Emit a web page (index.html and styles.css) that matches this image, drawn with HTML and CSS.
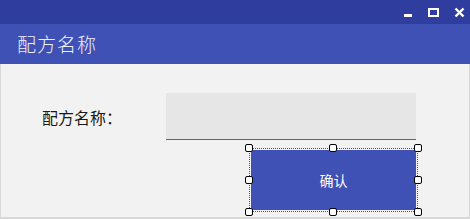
FILE: index.html
```html
<!DOCTYPE html>
<html lang="zh">
<head>
  <meta charset="UTF-8">
  <title>配方名称</title>
  <link rel="stylesheet" href="styles.css">
</head>
<body>
  <div class="window">
    <div class="titlebar">
      <span class="ctl ctl-min"></span>
      <span class="ctl ctl-max"></span>
      <span class="ctl ctl-close">
        <svg width="11" height="11" viewBox="0 0 11 11"><path d="M1.5 1.5 L9.5 9.5 M9.5 1.5 L1.5 9.5" stroke="#fff" stroke-width="2.4" fill="none"/></svg>
      </span>
    </div>
    <header>配方名称</header>
    <div class="content">
      <div class="form-row">
        <label class="field-label" for="recipeName">配方名称：</label>
        <input id="recipeName" class="field-input" type="text">
      </div>
      <div class="button-row">
        <div class="selected">
          <button class="ok-btn">确认</button>
          <span class="handle h-tl"></span>
          <span class="handle h-tm"></span>
          <span class="handle h-tr"></span>
          <span class="handle h-ml"></span>
          <span class="handle h-mr"></span>
          <span class="handle h-bl"></span>
          <span class="handle h-bm"></span>
          <span class="handle h-br"></span>
        </div>
      </div>
    </div>
  </div>
</body>
</html>
```

FILE: styles.css
```css
html, body {
  margin: 0; padding: 0;
  font-family: "Noto Sans CJK SC", "Noto Sans", sans-serif;
}
.window {
  width: 470px;
  height: 219px;
  display: flex;
  flex-direction: column;
  background: #f2f2f2;
}
.titlebar {
  height: 24px;
  background-color: #2f3e9e;
  display: flex;
  align-items: flex-start;
  justify-content: flex-end;
  padding-right: 5px;
}
.ctl {
  display: block;
  box-sizing: border-box;
}
.ctl-min {
  width: 8px;
  height: 3px;
  background: #fff;
  margin-top: 14px;
  margin-right: 16px;
}
.ctl-max {
  width: 11px;
  height: 9px;
  border: 2px solid #fff;
  margin-top: 8px;
  margin-right: 15px;
}
.ctl-close {
  width: 11px;
  height: 11px;
  margin-top: 7px;
}
.ctl-close svg { display: block; }
header {
  height: 40px;
  background-color: #3f51b5;
  color: #eef0fa;
  font-size: 19px;
  font-weight: 300;
  padding-left: 17px;
  line-height: 40px;
  letter-spacing: 1px;
}
.content {
  flex: 1;
  border: 1px solid #d8d8d8;
  border-top: none;
  border-bottom-width: 2px;
  padding-left: 41px;
  padding-top: 29px;
}
.form-row {
  display: flex;
  align-items: center;
}
.field-label {
  width: 124px;
  font-size: 16px;
  color: #1a1a1a;
}
.field-input {
  box-sizing: border-box;
  width: 250px;
  height: 47px;
  border: none;
  border-bottom: 1px solid #646464;
  background: #e6e6e6;
  outline: none;
}
.button-row {
  display: flex;
  padding-left: 207px;
  margin-top: 8px;
}
.selected {
  position: relative;
  box-sizing: border-box;
  width: 169px;
  height: 64px;
  border: 1px dotted #555;
  padding: 1px;
}
.ok-btn {
  display: block;
  width: 100%;
  height: 100%;
  border: none;
  border-radius: 3px;
  background-color: #3f51b5;
  color: #fff;
  font-family: "Noto Sans CJK SC", sans-serif;
  font-size: 14px;
}
.handle {
  position: absolute;
  width: 8px;
  height: 8px;
  box-sizing: border-box;
  background: #fff;
  border: 1.5px solid #000;
  border-radius: 2px;
}
.h-tl { left: -5px; top: -5px; }
.h-tm { left: 79px; top: -5px; }
.h-tr { right: -5px; top: -5px; }
.h-ml { left: -5px; top: 27px; }
.h-mr { right: -5px; top: 27px; }
.h-bl { left: -5px; bottom: -5px; }
.h-bm { left: 79px; bottom: -5px; }
.h-br { right: -5px; bottom: -5px; }
```
